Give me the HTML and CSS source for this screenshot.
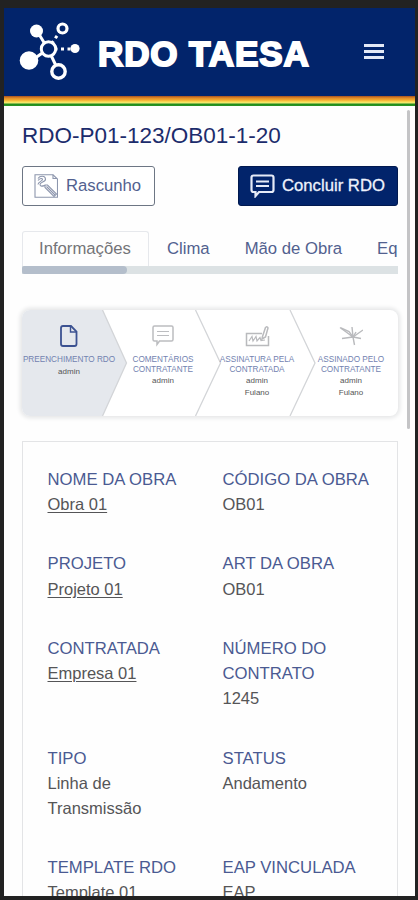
FILE: index.html
```html
<!DOCTYPE html>
<html lang="pt-BR">
<head>
    <meta charset="UTF-8">
    <meta name="viewport" content="width=device-width, initial-scale=1.0">
    <title>RDO TAESA</title>
    <link rel="stylesheet" href="styles.css">
</head>
<body>
    <div class="screen">
        <header class="header">
            <svg class="logo" width="62" height="60" viewBox="0 0 62 60" fill="none" stroke="#fff">
                <path d="M18 11L29 29M12 41L29 29M29 29L40 52" stroke-width="3"/>
                <path d="M29 29L44 7M29 29H56" stroke-width="3" stroke-dasharray="3 3.5"/>
                <circle cx="17.500" cy="11" r="6.500" fill="#fff" stroke="none"/>
                <circle cx="10" cy="40.500" r="9.300" fill="#fff" stroke="none"/>
                <circle cx="56" cy="28.500" r="4.600" fill="#fff" stroke="none"/>
                <circle cx="29.500" cy="29" r="7.200" fill="#02246b" stroke-width="3"/>
                <circle cx="43.500" cy="8.500" r="4.500" fill="#02246b" stroke-width="3.200"/>
                <circle cx="39.500" cy="51.500" r="6.700" fill="#02246b" stroke-width="3.400"/>
            </svg>
            <div class="brand">RDO TAESA</div>
            <button class="menu-btn" aria-label="Menu">
                <span></span>
                <span></span>
                <span></span>
            </button>
        </header>
        <div class="stripe"></div>

        <main class="content">
            <div class="page-scroll"></div>
            <h1 class="title">RDO-P01-123/OB01-1-20</h1>

            <div class="actions">
                <button class="btn btn-outline">
                    <svg width="24" height="24" viewBox="0 0 24 24" fill="none" stroke="#8d96ad" stroke-width="1.1">
                        <path d="M1 .8H19L23.500 5V23.300H1Z"/>
                        <path d="M19 .8V4.500H23"/>
                        <path d="M4 4.500C6 1.500 11 1.500 11.500 5C12 8 6 8 6 10.500C6 13 9 12 11 11.500"/>
                        <path d="M4 6.500C6 4 8.500 4 8.500 5.500C8.500 7 4 8 4 10.500"/>
                        <path d="M11 11L13.500 11L22.500 20L20 22.500L11 13.500Z"/>
                        <path d="M12.500 12.500L21 21"/>
                    </svg>
                    Rascunho
                </button>
                <button class="btn btn-primary">
                    <svg width="25" height="24" viewBox="0 0 25 24" fill="none" stroke="#e6ebf8" stroke-width="2.2">
                        <path d="M3.500 1.500H21.500Q23.500 1.500 23.500 3.500V16Q23.500 18 21.500 18H9L5.500 22V18H3.500Q1.500 18 1.500 16V3.500Q1.500 1.500 3.500 1.500Z"/>
                        <path d="M6 7.500H19M6 12H19" stroke-width="2"/>
                    </svg>
                    Concluir RDO
                </button>
            </div>

            <nav class="tabs">
                <a class="tab active">Informações</a>
                <a class="tab">Clima</a>
                <a class="tab">Mão de Obra</a>
                <a class="tab">Eq</a>
            </nav>
            <div class="tabs-scroll"><div class="tabs-thumb"></div></div>

            <section class="steps">
                <svg class="steps-bg" width="376" height="106" viewBox="0 0 376 106" fill="none" stroke="#d3d5d8" stroke-width="1.3">
                    <path d="M0 0H80.500L104.500 53L80.500 106H0Z" fill="#e5e8ed" stroke="none"/>
                    <path d="M80.500 0L104.500 53L80.500 106M173.500 0L198.500 53L173.500 106M268 0L293 53L268 106"/>
                </svg>
                <div class="step">
                    <svg width="22" height="24" viewBox="0 0 22 24" fill="none" stroke="#3c5291" stroke-width="1.8">
                        <path d="M5 2H13L18.500 7.500V20Q18.500 22 16.500 22H5Q3 22 3 20V4Q3 2 5 2Z"/>
                        <path d="M12.500 2V8H18.500" stroke-width="1.4"/>
                    </svg>
                    <div class="step-name">PREENCHIMENTO RDO</div>
                    <div class="step-user">admin</div>
                </div>
                <div class="step">
                    <svg width="22" height="24" viewBox="0 0 22 24" fill="none" stroke="#bcbdc0" stroke-width="1.5">
                        <path d="M2.500 2H19.500Q21 2 21 3.500V15.500Q21 17 19.500 17H7.500L5 20.500V17H2.500Q1 17 1 15.500V3.500Q1 2 2.500 2Z"/>
                        <path d="M5 7.500H17M5 11.500H17" stroke-width="1.200"/>
                    </svg>
                    <div class="step-name">COMENTÁRIOS<br>CONTRATANTE</div>
                    <div class="step-user">admin</div>
                </div>
                <div class="step">
                    <svg width="25" height="24" viewBox="0 0 25 24" fill="none" stroke="#b9babd" stroke-width="1.5">
                        <path d="M17 9.500H1.500V21.500H23.500V12"/>
                        <path d="M4 17L7 12.500L8 17L11 12.500L12 17L15 13.500L16 16.500L20 16" stroke-width="1.2"/>
                        <path d="M17.500 12.500L20.500 3.500Q22.500 2 23 4L20.500 13L17 15Z"/>
                    </svg>
                    <div class="step-name">ASSINATURA PELA<br>CONTRATADA</div>
                    <div class="step-user">admin<br>Fulano</div>
                </div>
                <div class="step">
                    <svg width="24" height="24" viewBox="0 0 24 24" fill="none" stroke="#b9babd" stroke-width="1.4">
                        <path d="M1 3.500L14 13L13 3M14 13L24 6M14 13L22 14.500M14 13L3 14.500M14 13L15.500 21"/>
                        <path d="M2 4L10 7.500L14 13L17 8"/>
                    </svg>
                    <div class="step-name">ASSINADO PELO<br>CONTRATANTE</div>
                    <div class="step-user">admin<br>Fulano</div>
                </div>
            </section>

            <section class="card">
                <div class="field">
                    <div class="label">NOME DA OBRA</div>
                    <a class="value link">Obra 01</a>
                </div>
                <div class="field">
                    <div class="label">CÓDIGO DA OBRA</div>
                    <div class="value">OB01</div>
                </div>
                <div class="field">
                    <div class="label">PROJETO</div>
                    <a class="value link">Projeto 01</a>
                </div>
                <div class="field">
                    <div class="label">ART DA OBRA</div>
                    <div class="value">OB01</div>
                </div>
                <div class="field">
                    <div class="label">CONTRATADA</div>
                    <a class="value link">Empresa 01</a>
                </div>
                <div class="field">
                    <div class="label">NÚMERO DO CONTRATO</div>
                    <div class="value">1245</div>
                </div>
                <div class="field">
                    <div class="label">TIPO</div>
                    <div class="value">Linha de Transmissão</div>
                </div>
                <div class="field">
                    <div class="label">STATUS</div>
                    <div class="value">Andamento</div>
                </div>
                <div class="field">
                    <div class="label">TEMPLATE RDO</div>
                    <div class="value">Template 01</div>
                </div>
                <div class="field">
                    <div class="label">EAP VINCULADA</div>
                    <div class="value">EAP</div>
                </div>
            </section>
        </main>
    </div>
</body>
</html>
```

FILE: styles.css
```css
* {
    box-sizing: border-box;
}

body {
    margin: 0;
    height: 900px;
    padding: 8px 3px 4px 4px;
    background: #222;
    font-family: "Liberation Sans", Arial, sans-serif;
    font-size: 16.5px;
    overflow: hidden;
}

.screen {
    height: 888px;
    background: #fefefe;
    overflow: hidden;
}

.header {
    height: 88px;
    background: #02246b;
    display: flex;
    align-items: center;
    padding: 0 31px 0 15px;
}

.logo {
    margin-bottom: 4px;
}

.brand {
    margin-left: 17px;
    margin-top: 4px;
    color: #fff;
    font-size: 35px;
    font-weight: bold;
    letter-spacing: 0.9px;
    line-height: 40px;
    white-space: nowrap;
    -webkit-text-stroke: 2px #fff;
}

.menu-btn {
    width: 20px;
    margin-left: auto;
    margin-bottom: 1px;
    padding: 0;
    border: none;
    background: none;
    display: flex;
    flex-direction: column;
    gap: 3px;
}

.menu-btn span {
    height: 3px;
    background: #e3e9f6;
}

.stripe {
    height: 10px;
    background: linear-gradient(#a5501f 0, #e08a28 2px, #f2ab2f 4px, #fbe05a 6px, #f0ea78 7px, #1f8c1c 8px, #2c9426 10px);
}

.content {
    position: relative;
    padding: 16px 17px 0 18px;
}

.page-scroll {
    position: absolute;
    top: 4px;
    right: 5px;
    width: 3px;
    height: 319px;
    border-radius: 2px;
    background: #c4c4c6;
}

.title {
    margin: 0;
    color: #1c2c6c;
    font-size: 22.5px;
    font-weight: normal;
    line-height: 28px;
}

.actions {
    display: flex;
    justify-content: space-between;
    margin-top: 16px;
}

.btn {
    display: flex;
    align-items: center;
    height: 40px;
    padding: 0 12px;
    border-radius: 3px;
    font-family: inherit;
    font-size: 16.7px;
    white-space: nowrap;
}

.btn-outline {
    width: 133px;
    gap: 8px;
    padding: 0 11px;
    border: 1px solid #6d7684;
    background: #fff;
    color: #52618f;
}

.btn-primary {
    width: 160px;
    gap: 7px;
    padding: 0 11px;
    border: 1px solid #01194f;
    background: #02246b;
    color: #eef2fc;
    -webkit-text-stroke: 0.3px #eef2fc;
}

.tabs {
    display: flex;
    height: 35px;
    margin-top: 25px;
    overflow: hidden;
}

.tab {
    flex-shrink: 0;
    padding: 1px 17px 0 18px;
    color: #52618f;
    font-size: 16.7px;
    line-height: 34px;
    white-space: nowrap;
}

.tab.active {
    width: 127px;
    padding: 0 16px;
    border: 1px solid #e6e8ec;
    border-bottom: none;
    border-radius: 3px 3px 0 0;
    color: #747478;
}

.tabs-scroll {
    height: 8px;
    background: #dce2e4;
}

.tabs-thumb {
    width: 105px;
    height: 8px;
    border-radius: 2px 4px 4px 2px;
    background: #b4becb;
}

.steps {
    position: relative;
    display: grid;
    grid-template-columns: repeat(4, 1fr);
    height: 106px;
    margin-top: 36px;
    border-radius: 8px;
    background: #fff;
    box-shadow: 0 0 4px 2px #e4e5e6;
}

.steps-bg {
    position: absolute;
    top: 0;
    left: 0;
    border-radius: 8px;
}

.step {
    position: relative;
    padding-top: 14px;
    text-align: center;
    white-space: nowrap;
}

.step svg {
    display: block;
    margin: 0 auto 7px;
}

.step-name {
    color: #7282b0;
    font-size: 8.2px;
    line-height: 9.5px;
}

.step-user {
    margin-top: 1px;
    color: #555;
    font-size: 8px;
    line-height: 12px;
}

.card {
    display: grid;
    grid-template-columns: 175px 150px;
    row-gap: 34.3px;
    margin-top: 25px;
    padding: 25px 24px 0 24.5px;
    border: 1.5px solid #e3e4e6;
}

.field {
    line-height: 25.1px;
}

.label {
    color: #4a5a92;
    font-size: 16.7px;
}

.value {
    color: #555557;
    font-size: 16.5px;
}

.field:nth-child(7) .value {
    width: 110px;
}

.link {
    text-decoration: underline;
    text-underline-offset: 2px;
}
```
